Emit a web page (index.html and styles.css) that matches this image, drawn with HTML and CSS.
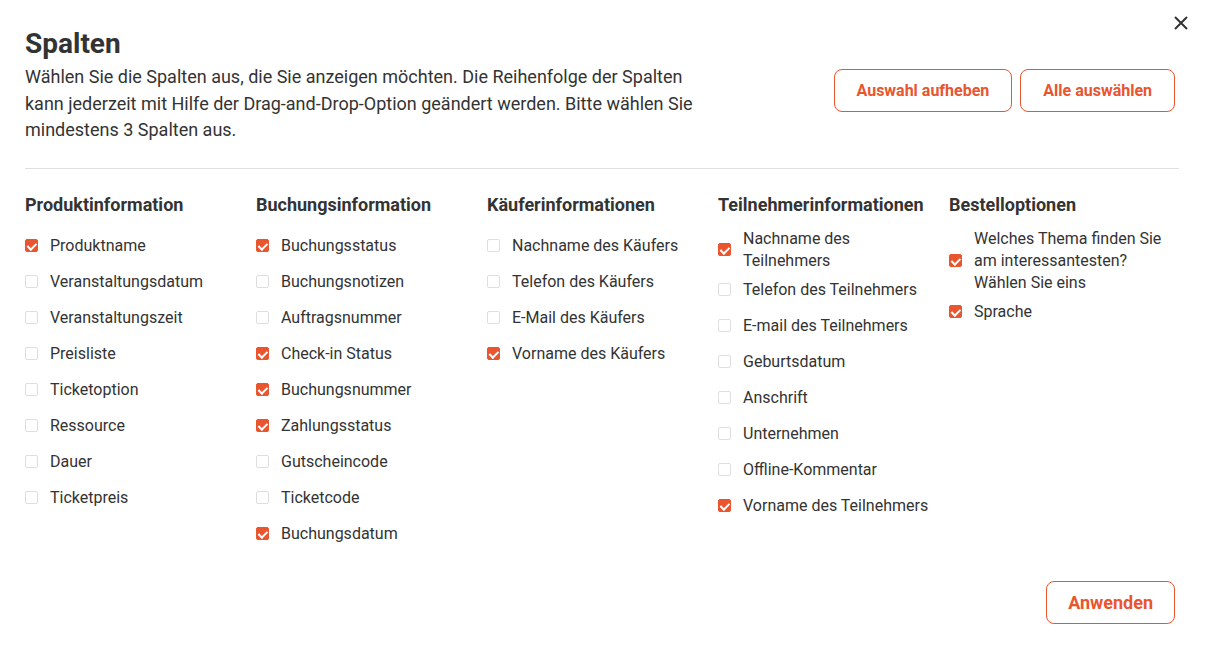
FILE: index.html
```html
<!DOCTYPE html>
<html lang="de">
<head>
<meta charset="utf-8">
<title>Spalten</title>
<link rel="stylesheet" href="styles.css">
</head>
<body>
<div class="modal">
  <button class="close" aria-label="Schließen">
    <svg width="14" height="14" viewBox="0 0 14 14"><path d="M1 1L13 13M13 1L1 13" stroke="#333" stroke-width="2" fill="none"/></svg>
  </button>
  <div class="header">
    <div class="intro">
      <h1 class="title">Spalten</h1>
      <p class="desc">Wählen Sie die Spalten aus, die Sie anzeigen möchten. Die Reihenfolge der Spalten kann jederzeit mit Hilfe der Drag-and-Drop-Option geändert werden. Bitte wählen Sie mindestens 3 Spalten aus.</p>
    </div>
    <div class="actions">
      <button class="btn">Auswahl aufheben</button>
      <button class="btn">Alle auswählen</button>
    </div>
  </div>
  <hr class="divider">
  <div class="columns">
    <div class="col">
      <h2 class="col-title">Produktinformation</h2>
      <div class="item"><span class="cb on"></span><span class="label">Produktname</span></div>
      <div class="item"><span class="cb"></span><span class="label">Veranstaltungsdatum</span></div>
      <div class="item"><span class="cb"></span><span class="label">Veranstaltungszeit</span></div>
      <div class="item"><span class="cb"></span><span class="label">Preisliste</span></div>
      <div class="item"><span class="cb"></span><span class="label">Ticketoption</span></div>
      <div class="item"><span class="cb"></span><span class="label">Ressource</span></div>
      <div class="item"><span class="cb"></span><span class="label">Dauer</span></div>
      <div class="item"><span class="cb"></span><span class="label">Ticketpreis</span></div>
    </div>
    <div class="col">
      <h2 class="col-title">Buchungsinformation</h2>
      <div class="item"><span class="cb on"></span><span class="label">Buchungsstatus</span></div>
      <div class="item"><span class="cb"></span><span class="label">Buchungsnotizen</span></div>
      <div class="item"><span class="cb"></span><span class="label">Auftragsnummer</span></div>
      <div class="item"><span class="cb on"></span><span class="label">Check-in Status</span></div>
      <div class="item"><span class="cb on"></span><span class="label">Buchungsnummer</span></div>
      <div class="item"><span class="cb on"></span><span class="label">Zahlungsstatus</span></div>
      <div class="item"><span class="cb"></span><span class="label">Gutscheincode</span></div>
      <div class="item"><span class="cb"></span><span class="label">Ticketcode</span></div>
      <div class="item"><span class="cb on"></span><span class="label">Buchungsdatum</span></div>
    </div>
    <div class="col">
      <h2 class="col-title">Käuferinformationen</h2>
      <div class="item"><span class="cb"></span><span class="label">Nachname des Käufers</span></div>
      <div class="item"><span class="cb"></span><span class="label">Telefon des Käufers</span></div>
      <div class="item"><span class="cb"></span><span class="label">E-Mail des Käufers</span></div>
      <div class="item"><span class="cb on"></span><span class="label">Vorname des Käufers</span></div>
    </div>
    <div class="col">
      <h2 class="col-title">Teilnehmerinformationen</h2>
      <div class="item"><span class="cb on"></span><span class="label">Nachname des Teilnehmers</span></div>
      <div class="item"><span class="cb"></span><span class="label">Telefon des Teilnehmers</span></div>
      <div class="item"><span class="cb"></span><span class="label">E-mail des Teilnehmers</span></div>
      <div class="item"><span class="cb"></span><span class="label">Geburtsdatum</span></div>
      <div class="item"><span class="cb"></span><span class="label">Anschrift</span></div>
      <div class="item"><span class="cb"></span><span class="label">Unternehmen</span></div>
      <div class="item"><span class="cb"></span><span class="label">Offline-Kommentar</span></div>
      <div class="item"><span class="cb on"></span><span class="label">Vorname des Teilnehmers</span></div>
    </div>
    <div class="col">
      <h2 class="col-title">Bestelloptionen</h2>
      <div class="item"><span class="cb on"></span><span class="label">Welches Thema finden Sie am interessantesten? Wählen Sie eins</span></div>
      <div class="item"><span class="cb on"></span><span class="label">Sprache</span></div>
    </div>
  </div>
  <div class="footer">
    <button class="btn btn-lg">Anwenden</button>
  </div>
</div>
</body>
</html>
```

FILE: styles.css
```css
* { box-sizing: border-box; }
html, body { margin: 0; padding: 0; background: #fff; }
body {
  font-family: Roboto, "Liberation Sans", sans-serif;
  color: #333;
}
.modal {
  position: relative;
  padding: 28px 26px 0 25px;
}
.close {
  position: absolute;
  top: 16px;
  right: 17px;
  width: 14px;
  height: 14px;
  padding: 0;
  border: 0;
  background: none;
  line-height: 0;
  cursor: pointer;
}
.header {
  display: flex;
  justify-content: space-between;
  align-items: flex-start;
}
.intro { width: 700px; }
.title {
  margin: 0 0 4px;
  font-size: 28px;
  line-height: 32px;
  font-weight: 700;
  color: #333;
}
.desc {
  margin: 0;
  font-size: 18px;
  line-height: 26.5px;
  color: #333;
}
.actions {
  display: flex;
  gap: 8px;
  margin-top: 41px;
  margin-right: 4px;
}
.btn {
  height: 43px;
  padding: 0 22px;
  border: 1px solid #e9552e;
  border-radius: 8px;
  background: #fff;
  color: #e9552e;
  font-family: Roboto, "Liberation Sans", sans-serif;
  font-size: 16px;
  font-weight: 700;
  cursor: pointer;
}
.btn-lg { font-size: 18px; padding: 0 21px; }
.divider {
  margin: 24px 0 0;
  border: 0;
  border-top: 1px solid #e0e0e0;
  height: 0;
}
.columns {
  display: grid;
  grid-template-columns: repeat(5, 231px);
  margin-top: 25px;
}
.col { padding-right: 16px; }
.col-title {
  margin: 0 0 12px;
  font-size: 18px;
  line-height: 22px;
  font-weight: 700;
  color: #333;
}
.item {
  display: flex;
  align-items: center;
  gap: 12px;
  min-height: 36px;
}
.cb {
  flex: 0 0 13px;
  width: 13px;
  height: 13px;
  border: 1.5px solid #dedede;
  border-radius: 2px;
  background: #fff;
  position: relative;
}
.cb.on {
  background: #e9552e;
  border-color: #e9552e;
}
.cb.on::after {
  content: "";
  position: absolute;
  left: 3px;
  top: 0.5px;
  width: 3.5px;
  height: 7px;
  border: solid #fff;
  border-width: 0 2px 2px 0;
  transform: rotate(45deg);
}
.label {
  font-size: 16px;
  line-height: 22px;
  color: #333;
}
.footer {
  display: flex;
  justify-content: flex-end;
  margin-top: 29px;
  margin-right: 4px;
}
```
